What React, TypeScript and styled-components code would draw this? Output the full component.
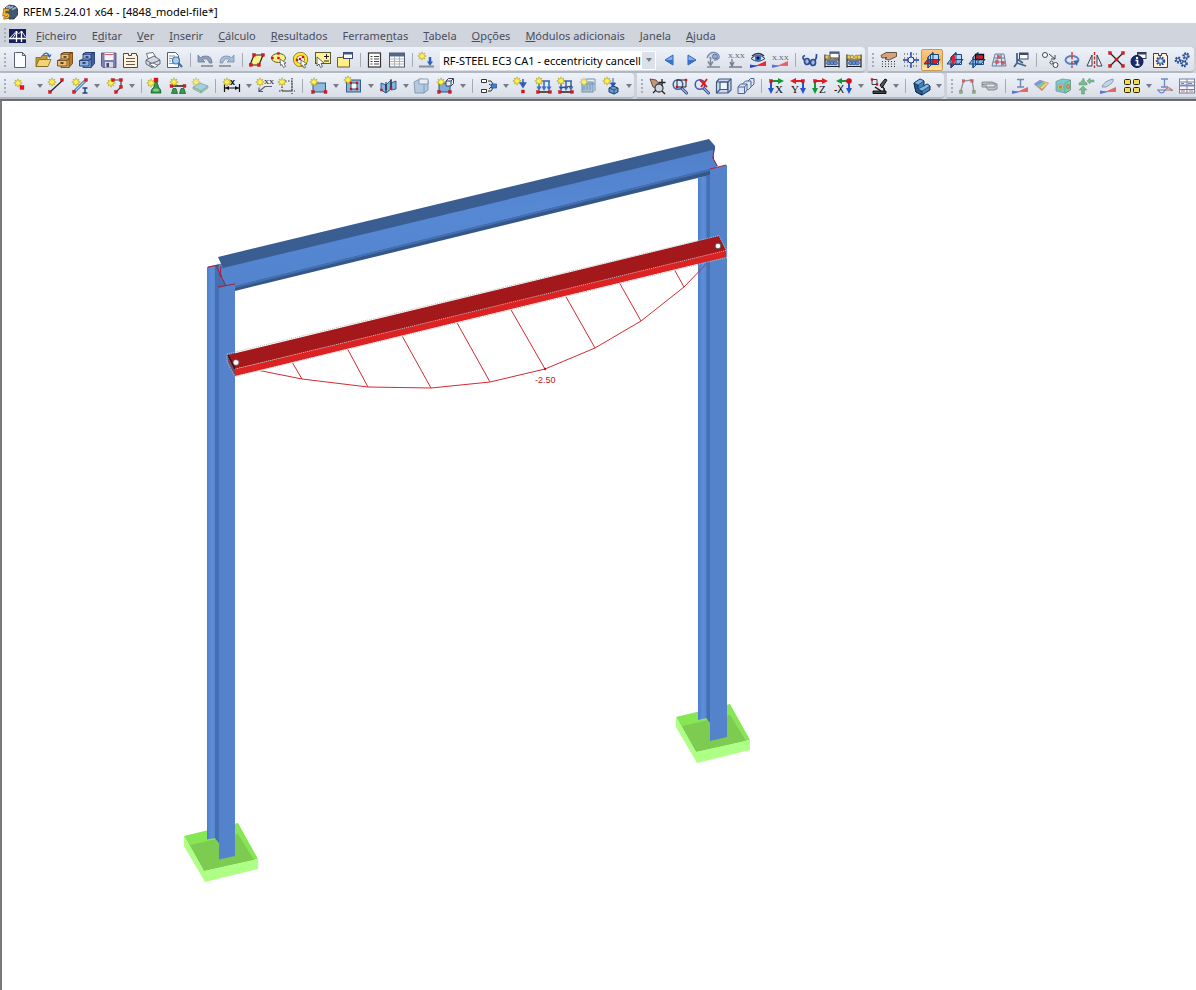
import React from "react";
import styled, { createGlobalStyle, css } from "styled-components";

const GlobalStyle = createGlobalStyle`
  * { box-sizing: border-box; }
  body { margin: 0; background: #fff; font-family: "Open Sans", "Noto Sans", sans-serif; font-size: 11px; }
  button, select { font: inherit; color: inherit; }
`;

const Window = styled.div`
  display: flex;
  flex-direction: column;
  min-height: 100vh;
  overflow: hidden;
`;

const TitleBar = styled.header`
  display: flex;
  align-items: center;
  gap: 5px;
  height: 23px;
  padding-left: 2px;
  background: #fff;
`;

const Title = styled.h1`
  margin: 0;
  font-family: "Noto Sans", "Open Sans", sans-serif;
  font-size: 11px;
  font-weight: 400;
  line-height: 16px;
  color: #000;
  white-space: nowrap;
`;

const MenuBar = styled.nav`
  display: flex;
  align-items: center;
  height: 24px;
  padding-top: 1px;
  background: #cfd4dd;
`;

const Menus = styled.div`
  display: flex;
  gap: 1px;
`;

const MenuItem = styled.button`
  border: 0;
  padding: 0 7px;
  background: none;
  color: #4b4d5c;
  font-family: "Noto Sans", "Open Sans", sans-serif;
  font-size: 11px;
  line-height: 16px;
  white-space: nowrap;
`;

const Logo = styled.svg`
  display: block;
  flex: none;
  margin-right: 3px;
`;

const Dock = styled.div`
  display: flex;
  gap: 3px;
  height: 26px;
  background: #ccd1da;
`;

const Bar = styled.div<{ $fill?: boolean }>`
  display: flex;
  align-items: center;
  flex: none;
  height: 26px;
  background: linear-gradient(#eef2f9, #e4e8f1 50%, #d9dee7);
  border-bottom: 2px solid #b3b7c0;
  border-radius: 0 4px 4px 0;
  padding: 2px 1px 0 0;
  ${(p) => p.$fill && css`flex: 1 0 auto;`}
`;

const Grip = styled.span`
  flex: none;
  width: 9px;
  height: 15px;
  padding-left: 4px;
  &::before {
    content: "";
    display: block;
    width: 2px;
    height: 15px;
    background: repeating-linear-gradient(#a9adb6 0 2px, transparent 2px 4px);
  }
`;

const Divider = styled.span`
  flex: none;
  width: 8px;
  height: 14px;
  padding-left: 5px;
  &::before {
    content: "";
    display: block;
    width: 1px;
    height: 14px;
    background: #a6aab3;
  }
`;

const ToolButton = styled.button<{ $menu?: boolean; $active?: boolean; $dim?: boolean }>`
  display: flex;
  align-items: center;
  flex: none;
  width: ${(p) => (p.$menu ? 35 : 22)}px;
  height: 22px;
  padding: 0 0 0 ${(p) => (p.$menu ? 6 : 4)}px;
  border: 0;
  border-radius: 2px;
  background: none;
  gap: 6px;
  ${(p) => p.$active && css`
    padding-left: 2px;
    border: 1px solid #c29b58;
    background: linear-gradient(#f9c98a, #fdb659 45%, #ffe6a0);
  `}
  svg { flex: none; display: block; }
  ${(p) => p.$dim && css`svg { opacity: 0.7; }`}
`;

const Combo = styled.label`
  display: flex;
  flex: none;
  width: 216px;
  height: 19px;
  margin: 0 2px 0 3px;
  background: #fff;
  border: 1px solid #fff;
`;

const ComboSelect = styled.select`
  appearance: none;
  flex: 1;
  min-width: 0;
  border: 0;
  padding: 0 0 0 2px;
  background: #fff;
  color: #000;
  font-family: "Noto Sans", "Open Sans", sans-serif;
  font-size: 11px;
  line-height: 17px;
  outline: none;
`;

const ComboArrow = styled.span`
  display: flex;
  align-items: center;
  justify-content: center;
  width: 13px;
  background: #dce0e8;
`;

const Workspace = styled.main`
  flex: 1;
  border-top: 2px solid #696b70;
  border-left: 2px solid #77797d;
  background: #fff;
`;

const Scene = styled.svg`
  display: block;
  width: 100%;
  height: auto;
`;

/* Shared icon fragments */
const Star = ({ x = 4, y = 4 }: { x?: number; y?: number }) => (
  <path
    transform={`translate(${x} ${y})`}
    d="M0-4.3L1-1.8 3-3 1.9-1 4.3 0 1.9 1 3 3 1 1.8 0 4.3-1 1.8-3 3-1.9 1-4.3 0-1.9-1-3-3-1-1.8Z"
    fill="#fff04a" stroke="#a19417" strokeWidth=".5"
  />
);
const Dot = ({ x, y, s = 3, c = "#e8131b" }: { x: number; y: number; s?: number; c?: string }) => (
  <rect x={x - s / 2} y={y - s / 2} width={s} height={s} fill={c} stroke="#8a1010" strokeWidth=".3" />
);
const Line = ({ d, c = "#333", w = 1 }: { d: string; c?: string; w?: number }) => (
  <path d={d} fill="none" stroke={c} strokeWidth={w} />
);
const Cabinet = ({ a, b, c }: { a: string; b: string; c: string }) => (
  <g stroke={c} strokeWidth=".8">
    <path d="M4 2l3-1.500h8.500v11L12 15.500z" fill={a} />
    <path d="M4 2h8v13.500H4z" fill={b} />
    <path d="M4 2l3-1.500h8.500L12 2z" fill={b} />
    <path d="M6.500 5h3" stroke="#222" strokeWidth="1.400" />
    <path d="M.5 8.500L4 7h8l-2 1.500v5.500H.5z" fill={b} />
    <path d="M.5 8.500h9.500" fill="none" />
    <path d="M3.500 11h3" stroke="#222" strokeWidth="1.500" />
  </g>
);
const Abacus = () => (
  <g>
    <Line d="M1 2.500v13M15 2.500v13M1 8h14M1 14.500h14" c="#222" w={1.200} />
    {[3, 6, 10.500, 13].map((x) => <circle key={x} cx={x} cy={5} r="1.900" fill="#ecd25a" stroke="#7d6514" strokeWidth=".6" />)}
    {[4.500, 8, 11.500].map((x) => <circle key={x} cx={x} cy={11} r="2" fill="#668ed6" stroke="#173572" strokeWidth=".6" />)}
  </g>
);
const Lens = () => (
  <g>
    <path d="M9.500 10l5 5" stroke="#2b4385" strokeWidth="3" strokeLinecap="round" />
    <path d="M9.500 10l5 5" stroke="#9fb6e4" strokeWidth="1.200" strokeLinecap="round" />
    <circle cx="6" cy="6.500" r="4.800" fill="#dce8fa" stroke="#3d5ea3" strokeWidth="1.500" />
  </g>
);
const Planes = ({ mode }: { mode: number }) => (
  <g strokeWidth="1">
    <path d="M4 5L9 0.500V11l-5 5z" fill={mode === 2 ? "#e5202a" : "#a9cdf0"} stroke="#17477d" />
    <path d="M3.500 7.500H16L12 12H0z" fill={mode === 1 ? "#e5202a" : "#8dbae8"} stroke="#17477d" />
    <path d="M6.500 2.500h8v5h-8z" fill={mode === 3 ? "#f01820" : "#b9d8f5"} stroke={mode === 3 ? "#111" : "#17477d"} strokeWidth={mode === 3 ? 1.400 : 1} />
    <path d="M6.500 7.500v5h8v-5" fill="none" stroke="#17477d" />
    {mode === 2 && <path d="M5 5.500l3-2.500v7l-3 3z" fill="#e5202a" />}
    <path d="M4 5v11l5-5V.5" fill="none" stroke="#17477d" />
  </g>
);
const Axes = ({ a, b, flip, t }: { a: string; b: string; flip?: boolean; t: string }) => (
  <g>
    <g transform={flip ? "matrix(-1 0 0 1 16 0)" : undefined}>
      <path d="M3 3h8" stroke={a} strokeWidth="2" />
      <path d="M10 0l6 3-6 3z" fill={a} />
      <path d="M3 4v7" stroke={b} strokeWidth="2" />
      <path d="M0 10l3 6 3-6z" fill={b} />
      <Dot x={3} y={3} s={3} />
    </g>
    <text x={flip ? 1 : 7} y="15" fontFamily="Liberation Serif, serif" fontSize="11" fill="#111">{t}</text>
  </g>
);
const Frame = () => (
  <g>
    <path d="M3 3h11M3 3v7M8 3v7M13 3v7" stroke="#3466b5" strokeWidth="1.500" fill="none" />
    <path d="M.5 8.500h5L3 13zM5.500 8.500h5L8 13zM10.500 8.500h5L13 13z" fill="#3b70c6" />
    <Line d="M2 14h12" c="#222" w={1.500} />
    <Dot x={2} y={14} /><Dot x={14} y={14} />
  </g>
);
const Eye = () => (
  <g>
    <path d="M1 6.500Q8 0 15 6.500Q8 12 1 6.500Z" fill="#e8eef8" stroke="#28334c" strokeWidth="1" />
    <path d="M2 4Q8-1 14 4" fill="none" stroke="#28334c" strokeWidth="1.400" />
    <circle cx="8" cy="6" r="3.200" fill="#3b73d0" /><circle cx="8" cy="6" r="1.500" fill="#051330" />
  </g>
);
const Wedge = () => (
  <g><path d="M0 12.500V16l8-2z" fill="#2943c8" /><path d="M16 9v4.500H6z" fill="#ee2a30" /><Line d="M0 13.500h16" c="#555" w={.7} /></g>
);
const TinyText = ({ x = 0, y = 6 }: { x?: number; y?: number }) => (
  <text x={x} y={y} fontFamily="Liberation Serif, serif" fontSize="7" fill="#222">X.XX</text>
);
const Gear = ({ x, y, r }: { x: number; y: number; r: number }) => (
  <g><circle cx={x} cy={y} r={r} fill="none" stroke="#264a8c" strokeWidth="2.400" strokeDasharray="1.500 1" /><circle cx={x} cy={y} r={r - .5} fill="#8fb0e6" stroke="#264a8c" strokeWidth=".8" /><circle cx={x} cy={y} r={r / 3} fill="#fff" /></g>
);

const icons: Record<string, React.ReactNode> = {
  page: <path d="M2.500.500h7l3 3V15.500h-11V.5zM9.500.500v3h3" fill="#fbfcfd" stroke="#596273" />,
  open: <g stroke="#7c6216" strokeWidth=".8"><path d="M1 14.500V5.500h5l1-2h5v11z" fill="#c19a35" /><path d="M1 14.500L4 7.500h12l-3 7z" fill="#f2d477" /><path d="M8 3Q12-1 14.500 4M12.500 3l2 2 1.500-2.500" fill="none" stroke="#3c6aa6" strokeWidth="1.300" /></g>,
  cabOrange: <Cabinet a="#b97b2b" b="#f0be74" c="#5d3a0d" />,
  cabBlue: <Cabinet a="#3d60a5" b="#8eb0ec" c="#162c60" />,
  save: <g><path d="M.5 1h14.500v14.500H2L.5 14z" fill="#7d7fae" stroke="#48496f" strokeWidth=".8" /><rect x="3.500" y="1" width="9" height="7" fill="#f3f4fa" /><path d="M3.500 2.500h9" stroke="#e05c68" /><rect x="4" y="10" width="8" height="5.500" fill="#d8dae8" /><rect x="5.500" y="11" width="2.500" height="4" fill="#43456d" /></g>,
  report: <g><path d="M.5 3.500v-2h5v2h3v-2h5v2h1v12H.5z" fill="#fff3e0" stroke="#54483a" /><Line d="M3 6.500h9M3 9.500h9M3 12.500h9" c="#695c4a" /></g>,
  print: <g stroke="#4b5060" strokeWidth=".8"><path d="M3 6.500L1.500 1.500 8 .5l3 5z" fill="#fff" /><path d="M1 8l8-4 6 4v4L7 15.500 1 12z" fill="#d5d9e3" /><path d="M1 8l6 3.500L15 8M7 11.500v4" fill="none" /><path d="M4 12l6 3.500 3-2-5-2.500z" fill="#fff" /></g>,
  preview: <g><path d="M.5.500h8l3 3V15.500H.5z" fill="#fafbfd" stroke="#555f70" /><Line d="M2 4h6M2 6.500h3M2 9h2M2 11.500h4" c="#8c94a3" /><circle cx="9" cy="8.500" r="3.500" fill="#a7cdf1" stroke="#4674ac" strokeWidth="1.200" /><path d="M11.500 11l3.500 4" stroke="#416da6" strokeWidth="2" /></g>,
  undo: <g><path d="M1 3v7h7L5.500 7.500Q10 5 12.500 11h2.500Q15 2 5 4.500L3.500 6z" fill="#8fa0bb" stroke="#5d6f8c" strokeWidth=".7" /><path d="M4 14h12" stroke="#7d8696" strokeWidth="1.500" /></g>,
  redo: <g><path d="M15 3v7H8l2.500-2.500Q6 5 3.500 11H1Q1 2 11 4.500L12.500 6z" fill="#a8bdd6" stroke="#6d84a1" strokeWidth=".7" /><path d="M0 14h12" stroke="#7d8696" strokeWidth="1.500" /></g>,
  selPlane: <g><path d="M5 3h9l-4 10H1z" fill="#fff08a" stroke="#222" strokeWidth="1.200" /><Dot x={5} y={3} /><Dot x={14} y={3} /><Dot x={2} y={13} /><Dot x={10} y={13} /></g>,
  selEllipse: <g><ellipse cx="7.500" cy="6" rx="7" ry="4.500" fill="#fff28e" stroke="#65601f" /><Dot x={7.5} y={1.5} s={2} /><Dot x={1.5} y={6} s={2} /><Dot x={7.5} y={6} s={2} /><path d="M9 7l6 4-2 .5 1.500 3-2 1-1.500-3-1.500 1z" fill="#fff" stroke="#444" strokeWidth=".7" /></g>,
  selRing: <g><circle cx="7.500" cy="7.500" r="5.500" fill="#fff" stroke="#63550b" strokeWidth="4" /><circle cx="7.500" cy="7.500" r="5.500" fill="none" stroke="#ffe334" strokeWidth="2.800" /><Dot x={7} y={7} s={2} /><Dot x={4} y={8} s={2} /><Dot x={10} y={5} s={2} /><path d="M8 8l6 4-2.500.500 1 3-1.500.500-1.500-3-1.500 1z" fill="#fff" stroke="#444" strokeWidth=".7" /></g>,
  selPlus: <g><rect x=".5" y=".5" width="15" height="11" fill="#fff294" stroke="#5b572f" /><path d="M9 4.500h5M11.500 2v5M9 9h5" stroke="#222" strokeWidth="1" /><path d="M2 5l7 6-3 .5 1.500 3-2 1L4 12l-2 2z" fill="#fff" stroke="#444" strokeWidth=".8" /></g>,
  notes: <g><path d="M.5 5.500h5l1-1.500h6V15H.5z" fill="#ffef86" stroke="#686134" /><rect x="6.500" y=".5" width="9" height="6" fill="#fafbff" stroke="#3b4668" /><path d="M6.500 1.500h9" stroke="#47578b" strokeWidth="2" /></g>,
  list: <g><rect x="1.500" y="1" width="12" height="14" fill="#fff" stroke="#333" strokeWidth="1.200" /><Line d="M3.500 4.500h2M7 4.500h5M3.500 7h2M7 7h5M3.500 9.500h2M7 9.500h5M3.500 12h2M7 12h5" c="#444" /></g>,
  table: <g><rect x=".5" y="1" width="15" height="14" fill="#fff" stroke="#52576a" /><rect x="1" y="1" width="14" height="3.500" fill="#4f6692" /><Line d="M1 7h14M1 9.500h14M1 12h14M5.500 4v11M10.500 4v11" c="#9ba0a9" w={.8} /></g>,
  loadNew: <g><Star x={3} y={4} /><path d="M11 5v6" stroke="#2b61bd" strokeWidth="2.500" /><path d="M8 9.500h6L11 14z" fill="#2b61bd" /><path d="M0 14.500h15" stroke="#888d99" strokeWidth="2" /></g>,
  prev: <g><path d="M11 3v10L3 8z" fill="#7fb0f0" stroke="#3263b4" strokeWidth="1" /><path d="M11 8v5L3 8z" fill="#3a6fc8" /></g>,
  next: <g><path d="M4 3v10l8-5z" fill="#7fb0f0" stroke="#3263b4" strokeWidth="1" /><path d="M4 8v5l8-5z" fill="#3a6fc8" /></g>,
  eyeLoad: <g><path d="M1 6Q3 0 9 .5Q14 2 13 6Q10 9 8 8" fill="#b9cae6" stroke="#4a5c80" strokeWidth="1.200" /><circle cx="9" cy="4.500" r="2.500" fill="#6d92cd" stroke="#2d4476" /><path d="M4.500 5v7M2 9.500l2.500 4 2.500-4M1 15h13" stroke="#5a6378" strokeWidth="1.500" fill="none" /></g>,
  xxLoad: <g><TinyText /><path d="M4 7v6M2 10l2 4 2-4M1 15h13" stroke="#49536b" strokeWidth="1.300" fill="none" /></g>,
  eyeResult: <g><Eye /><Wedge /></g>,
  xxResult: <g><TinyText y={8} /><Wedge /></g>,
  glasses: <g fill="none" stroke="#2e4d90" strokeWidth="1.700"><ellipse cx="5" cy="9.500" rx="2.500" ry="3" fill="#a6bce8" /><ellipse cx="11" cy="10.500" rx="2.500" ry="3" fill="#a6bce8" /><path d="M2.500 8Q-1 5 3 3.500M13 8.500Q15 6 14.500 2" /></g>,
  abacusWin: <g><Abacus /><rect x="6" y="0" width="9" height="6" fill="#fff" stroke="#404a61" /><path d="M6 1h9" stroke="#404a61" strokeWidth="1.500" /></g>,
  abacus: <Abacus />,
  handGrid: <g><path d="M0 3.500l5-3h10.500V4.500L8 8 4 7l2-1.500-5 .5z" fill="#d2a380" stroke="#523522" strokeWidth=".8" /><path d="M1 9.500h14M1 12h14M1 14.500h14" stroke="#333" strokeWidth="1.200" strokeDasharray="1 2" /></g>,
  snap: <g><path d="M1 2h14M1 6h14M1 10h14M1 14h14" stroke="#333" strokeWidth="1.200" strokeDasharray="1 2" /><path d="M8 0v16M0 8h16" stroke="#1734b8" strokeWidth="1.300" /><circle cx="8" cy="8" r="3" fill="#e8f0fb" stroke="#1d3a80" strokeWidth="1" /></g>,
  plane1: <Planes mode={1} />, plane2: <Planes mode={2} />, plane3: <Planes mode={3} />,
  gridPts: <g><path d="M4 2h9l2 12H1zM7 2L5 14M10 2l1 12M3 6h11M2 10h12" stroke="#33587f" fill="#d4e4f3" strokeWidth="1" /><Dot x={8} y={5} /><Dot x={6} y={10} /><Dot x={12} y={11} /></g>,
  axesWin: <g><path d="M4 1v10l-3 4M4 11l9 3M4 7l6 4" stroke="#46638c" strokeWidth="1.800" fill="none" /><rect x="6.500" y="1" width="8.500" height="6" fill="#fff" stroke="#3c4a66" /><path d="M6.500 2H15" stroke="#3c4a66" strokeWidth="2" /></g>,
  copy: <g fill="#fff" stroke="#444"><circle cx="2" cy="3" r="2.500" /><circle cx="12.500" cy="13" r="2.500" /><circle cx="8.500" cy="10.500" r="1.500" /><path d="M6 2l6 5M12 3v4H8" fill="none" /></g>,
  rotate: <g><ellipse cx="7" cy="8" rx="6.500" ry="4" fill="none" stroke="#5d83bd" strokeWidth="2" /><path d="M8 9l4 5 1-6z" fill="#3d66a5" /><path d="M7 0v16" stroke="#e21a22" strokeWidth="1.300" strokeDasharray="3 1.500" /></g>,
  mirror: <g><path d="M5 3v11H0zM10 3v11h5z" fill="#edf1f8" stroke="#38404f" /><path d="M7.500 0v16" stroke="#e21a22" strokeWidth="1.300" strokeDasharray="3 1.500" /></g>,
  cross: <g><Line d="M1 1l13 13M14 1L1 14" c="#222" w={1.300} /><Dot x={1} y={1} /><Dot x={14} y={1} /><Dot x={1} y={14} /><Dot x={14} y={14} /><Dot x={7.5} y={7.5} s={3} /></g>,
  info: <g><rect x="6.500" y=".5" width="8.500" height="6" fill="#fff" stroke="#333d5c" /><path d="M6.500 1.500H15" stroke="#333d5c" strokeWidth="2" /><circle cx="6" cy="9.500" r="6" fill="#1b2b73" stroke="#0a1238" /><path d="M4.500 8.500h2v5M4.500 13h4" stroke="#fff" strokeWidth="1.600" fill="none" /><circle cx="6" cy="6" r="1.200" fill="#fff" /></g>,
  settings: <g><path d="M.5 3.500v-2h5v2h3v-2h5v2h1v12H.5z" fill="#fff1dc" stroke="#3f3d42" /><Gear x={7.5} y={9} r={3.5} /></g>,
  gears: <g><Gear x={3} y={8} r={2.300} /><Gear x={11} y={4} r={2.500} /><Gear x={9} y={11.500} r={2.600} /></g>,

  node: <g><Star x={3} y={5} /><Dot x={7} y={9.5} s={4} /></g>,
  line: <g><Line d="M2 14L14 3" c="#222" w={1.200} /><Star /><Dot x={2} y={14} /><Dot x={14} y={2} /></g>,
  member: <g><path d="M2 14L13 3" stroke="#3867a5" strokeWidth="3" /><path d="M2 14L13 3" stroke="#b3d0ef" strokeWidth="1.300" /><Star /><Dot x={2} y={14} /><Dot x={14} y={2} /><path d="M10.500 10h5M10.500 15h5M13 10v5" stroke="#24417c" strokeWidth="1.500" /></g>,
  polyline: <g><Line d="M5 2h9v7l-5 5" c="#444" w={1.200} /><Star y={5} /><Dot x={6} y={2} /><Dot x={14} y={2} /><Dot x={14} y={9} /><Dot x={9} y={14} /></g>,
  support: <g><path d="M7 4h2l1.500 5Q13 11 13 15H3Q3 11 6 9z" fill="#369a48" stroke="#175c28" strokeWidth=".8" /><ellipse cx="8" cy="12" rx="3" ry="1.500" fill="#7fcf8a" /><Dot x={8} y={2} s={4} /><Star x={3} y={5} /></g>,
  lineSupport: <g><Line d="M1 8h14" c="#222" w={1.500} /><Dot x={1.500} y={8} /><Dot x={14.500} y={8} /><path d="M3 10.500h3l1.500 5h-6zM11 10.500h3l1.500 5h-6z" fill="#389749" stroke="#175c28" strokeWidth=".7" /><Star y={4} /></g>,
  layer: <g><path d="M1 9l7-4 8 3-7 5z" fill="#86c7de" stroke="#468ca7" strokeWidth=".8" /><path d="M1 9v2l8 4v-2zM9 15l7-5V8l-7 5z" fill="#8bbf91" stroke="#4d8b64" strokeWidth=".6" /><Star /></g>,
  dimension: <g><Line d="M.5 6v8M15.500 6v8M1 10h14" c="#111" w={1.200} /><path d="M1 10l4-2v4zM15 10l-4-2v4z" fill="#111" /><Star x={3} y={4} /><text x="6" y="7" fontSize="9" fontWeight="700" fontFamily="Liberation Sans, sans-serif">x</text></g>,
  comment: <g><Line d="M15 8.500H8l-6 5M2 9.500v4h4" c="#59616f" w={1.200} /><text x="7" y="6" fontSize="7" fontFamily="Liberation Serif, serif">XX</text><Star x={3} /></g>,
  region: <g><path d="M3 3h10v10H3zM0 13h16M13 0v16" fill="none" stroke="#333" strokeWidth="1.200" strokeDasharray="1.500 1.500" /><Star x={3} /></g>,
  surface: <g><rect x="2" y="5" width="12.500" height="9" fill="#8fb9df" stroke="#2d5b8e" /><Star x={3} /><Dot x={2} y={14} /><Dot x={14.500} y={14} /></g>,
  opening: <g><rect x=".5" y="2" width="14" height="12" fill="#8fb1d3" stroke="#355e88" /><rect x="5" y="5" width="6" height="6" fill="#f3f7fd" stroke="#355e88" /><Star x={2} y={2} /><Dot x={5} y={5} s={2} /><Dot x={11} y={5} s={2} /><Dot x={5} y={11} s={2} /><Dot x={11} y={11} s={2} /></g>,
  surfaces: <g stroke="#265287" strokeWidth=".9"><path d="M0 5l5 2v8l-5-3zM5 7l5-5v9l-5 4zM10 5l5-2v8l-5 1z" fill="#85b2df" /><Line d="M5 4v8M10 1v9" c="#222" /><Dot x={.5} y={12} s={2} /><Dot x={10} y={10} s={2} /></g>,
  solid: <g stroke="#466c93" strokeWidth=".8"><path d="M0 4l6-3 8 1v10l-4 3H1z" fill="#9fbed9" /><path d="M10 5h5M10 5v10" fill="none" /><path d="M5 1h9v5H5z" fill="#e9eef5" /></g>,
  solidNew: <g><path d="M1 5h11v9H1z" fill="#7eaddd" stroke="#265287" /><path d="M8 3h5v5H8zM8 3l2.500-2.500H15.500V5.500L13 8M13 3l2.500-2.500" fill="#e7edf7" stroke="#39465c" /><Star x={3} y={4} /><Dot x={1} y={14} /><Dot x={12} y={14} /></g>,
  connect: <g><path d="M.5 1.500h5v3h-5zM.5 11.500h5v3h-5z" fill="#fff" stroke="#333" /><path d="M7 3h3l2 3M7 13h3l2-3" fill="none" stroke="#333" /><path d="M8 6l3 2-3 3" stroke="#333" fill="none" /><rect x="10.500" y="6" width="5" height="4" fill="#3d82db" stroke="#204d91" strokeWidth=".7" /></g>,
  nodeLoad: <g><Star x={3} y={3} /><path d="M9 1v6M6.500 5L9 9l2.500-4z" fill="#285dbc" stroke="#285dbc" strokeWidth="1.500" /><Dot x={9} y={13.500} /></g>,
  lineLoad: <g><Frame /><Star x={3} y={3} /></g>,
  lineLoad2: <g><Frame /><Star x={3} y={3} /><Line d="M2 10l12-2" c="#444" /></g>,
  loadGray: <g><rect x="2" y="4" width="11" height="10" fill="#8db5cf" stroke="#457390" /><path d="M6 1h9v12M6 1v6M4 7v5M7 7v5M10 7v5M6 6h9" fill="none" stroke="#456aa3" /><Star /></g>,
  solidLoad: <g><path d="M9 0v7M6.500 5L9 9l2.500-4z" fill="#285dbc" stroke="#285dbc" /><path d="M5 10l4-2 5 2v4l-4 2-5-2z" fill="#679bd3" stroke="#1d406f" /><path d="M5 10l5 2v4M10 12l4-2" fill="none" stroke="#1d406f" strokeWidth=".8" /><Star x={3} y={3} /></g>,

  handMove: <g><path d="M0 1l6 1 4 5-3 3-4-1z" fill="#c79774" stroke="#493327" strokeWidth=".8" /><circle cx="9" cy="10" r="4" fill="#cfd6de" stroke="#404650" strokeWidth="1.300" /><Line d="M12 1v7M8.500 4.500h7M6 12l-3 3M12 13l3 3" c="#222" w={1.300} /></g>,
  zoomWin: <g><Lens /><path d="M5 2h9v7H5z" fill="none" stroke="#222" strokeWidth="1" /><Dot x={14} y={2} s={2} /><Dot x={5} y={9} s={2} /></g>,
  zoomAll: <g><Lens /><path d="M6 2l7 7M13 1L7 9" stroke="#e1171f" strokeWidth="1.800" /></g>,
  box3d: <g fill="none" stroke="#425982" strokeWidth="1.200"><path d="M.5 4L3 1h12v11l-3 3H.5z" fill="#c9d8ee" /><path d="M4 4h7.500v7.500H4z" fill="#f0f5fc" /><path d="M.5 15L4 11.500M12 15V4M.5 4H12l3-3" /></g>,
  boxes: <g fill="#dde5f0" stroke="#4a6694" strokeWidth="1"><path d="M10 3l2.500-2.500H16V6l-2.500 2.500H10z" /><path d="M5 5.500L7.500 3H13v6l-2.500 2.500H5z" /><path d="M0 9l2.500-3H9v6l-2.500 3.500H0zM0 9h6.500v6.500M6.500 9L9 6" /></g>,
  axX: <Axes a="#16963b" b="#2754c9" t="X" />,
  axY: <Axes a="#e31b23" b="#2754c9" flip t="Y" />,
  axZ: <Axes a="#e31b23" b="#16963b" t="Z" />,
  axNegX: <g><Axes a="#16963b" b="#2754c9" flip t="" /><circle cx="13" cy="3" r="2.800" fill="#d3121c" /><text x="-2" y="15" fontFamily="Liberation Sans, sans-serif" fontSize="10">-X</text></g>,
  robot: <g><path d="M9 7l5-6 2 1-5 8z" fill="#555" stroke="#111" /><path d="M4 9l6 4" stroke="#111" strokeWidth="1.500" /><path d="M2 13h13v2.500H2zM11 8q4 2 2 6" fill="#444" stroke="#111" /><path d="M1 1.500h5v5H1z" fill="none" stroke="#444" /><Dot x={1} y={1.5} s={2} /><Dot x={6} y={6.5} s={2} /></g>,
  render: <g stroke="#102f52" strokeWidth="1"><path d="M0 5l6-4 4 2v5l3-2 3 2v4l-8 5-6-3z" fill="#3f82bd" /><path d="M0 5l4 2v4l4 2v4l-6-3z" fill="#2a5b8f" /><path d="M0 5l6-4 4 2-6 4zM4 11l6-3 3-2 3 2-8 5z" fill="#7fb8e6" strokeWidth=".6" /></g>,

  frame: <g><Line d="M.5 14L3.500 3 12 2l2 12" c="#66717f" w={1.300} /><Dot x={3.500} y={3} s={2.500} /><Dot x={12} y={3} s={2.500} /><Dot x={1} y={14} s={3} c="#3faf52" /><Dot x={14} y={14} s={3} c="#3faf52" /></g>,
  camera: <g stroke="#555b63" strokeWidth=".9"><path d="M0 4h10l5 2v5l-3 1H6l-2-3H0z" fill="#b1b5bb" /><path d="M4 6h9v3H4zM0 6.500h3" fill="#e4e6ea" /></g>,
  memberRes: <g><path d="M5 1.500h7M8.500 2v7M5 9h7" stroke="#3d639f" strokeWidth="1.500" /><Wedge /></g>,
  isoSurf: <g><path d="M0 6l6-4 9 3-7 8z" fill="#e9432f" /><path d="M2 6.500L7 3l7 2.500L8 11z" fill="#edd947" /><path d="M0 6l6-4 4 1.500-7 5z" fill="#4f74e0" /><path d="M3 7.500L9 4l3 1-6 5z" fill="#4bbf73" /></g>,
  isoSolid: <g stroke="#29735a" strokeWidth=".7"><path d="M0 3.500L6 1l8.500 1v10l-5 3L0 13z" fill="#4fbccc" /><path d="M9 5l5.500-3v10l-5.500 3z" fill="#65c873" /><circle cx="4.500" cy="9" r="3" fill="#f3e04a" /><circle cx="4.500" cy="9" r="1.500" fill="#e9332b" /><ellipse cx="12" cy="8.500" rx="1.500" ry="2.500" fill="#f0602f" /></g>,
  reaction: <g><path d="M5.500 0l1.500 4 2 1v2H1V5l2-1zM5 8l4 4H6.500v4h-3v-4H1zM9 3l3-3v2h4v2h-4v2z" fill="#4ba862" stroke="#286d3b" strokeWidth=".5" /></g>,
  stress: <g><path d="M2 9Q4 3 13 1Q15 4 6 9z" fill="#b7cbe3" stroke="#637b9b" /><Wedge /></g>,
  panels: <g stroke="#292100" strokeWidth="1" fill="#f5dc55"><rect x=".5" y="1.500" width="6" height="5" rx="1" /><rect x="9.500" y="1.500" width="6" height="5" rx="1" /><rect x=".5" y="9.500" width="6" height="5" rx="1" /><rect x="9.500" y="9.500" width="6" height="5" rx="1" /></g>,
  diagram: <g><path d="M4 1h7M7.500 1v8M4 9h7" stroke="#3d639f" strokeWidth="1.300" /><path d="M0 12h16" stroke="#555" /><path d="M1 12q4 6 7 0" fill="none" stroke="#2f4bd2" strokeWidth="1.200" /><path d="M8 12q4-5 7 1" fill="none" stroke="#e5232a" strokeWidth="1.200" /></g>,
  resTable: <g><rect x=".5" y="1" width="15" height="14" fill="#fff" stroke="#4c5678" /><Line d="M1 4h14M1 11.500h14M8 1v14" c="#4c5678" /><path d="M1 7.500h14" stroke="#5061b4" strokeWidth="2" /><Line d="M2 5.500h3M9 5.500h4M2 13h4M10 13h4" c="#de2a34" /></g>,
};

const Caret = () => (
  <svg width="6" height="4" viewBox="0 0 6 4" aria-hidden="true"><path d="M0 0h6L3 4z" fill="#777b84" /></svg>
);

/* Suffixes: "+" opens a menu, "*" is switched on, "~" is unavailable; "|" is a divider. */
const Tools = ({ items }: { items: string }) => (
  <>
    {items.split(" ").map((item, i) => {
      if (item === "|") return <Divider key={i} />;
      const name = item.replace(/[+*~]/g, "");
      const menu = item.includes("+");
      return (
        <ToolButton key={i} type="button" aria-label={name} $menu={menu} $active={item.includes("*")} $dim={item.includes("~")}>
          <svg width="16" height="16" viewBox="0 0 16 16" overflow="visible" aria-hidden="true">{icons[name]}</svg>
          {menu && <Caret />}
        </ToolButton>
      );
    })}
  </>
);

const menus = ["_Ficheiro", "E_ditar", "_Ver", "_Inserir", "_Cálculo", "_Resultados", "Ferrame_ntas", "_Tabela", "_Opções", "_Módulos adicionais", "_Janela", "_Ajuda"];

const MenuLabel = ({ text }: { text: string }) => {
  const i = text.indexOf("_");
  return <>{text.slice(0, i)}<u>{text[i + 1]}</u>{text.slice(i + 2)}</>;
};

const Support = ({ x, y }: { x: number; y: number }) => (
  <g transform={`translate(${x} ${y})`}>
    <path d="M0 13L54 0 74 36 20 48z" fill="#87e654" />
    <path d="M6 22L54 11 70 37 20 48z" fill="#7dcc51" />
    <path d="M0 13L20 48 74 36V46L21 59 0 23z" fill="#aeff85" />
  </g>
);

const ribs = "M292 362L302 379M347 348L368 387M401 334L431 388M456 321L490 382M510 308L545 369M565 295L595 348M619 282L641 321M674 269L684 287";

const Model = () => (
  <Scene viewBox="2 101 1194 889" preserveAspectRatio="xMinYMin meet" role="img" aria-label="Modelo">
    <defs>
      <linearGradient id="back" x1="0" x2="1"><stop offset="0" stopColor="#4d7dc8" /><stop offset=".35" stopColor="#5c8ed9" /><stop offset="1" stopColor="#5182cb" /></linearGradient>
      <linearGradient id="web" x1="0" y1="0" x2=".12" y2="1"><stop offset="0" stopColor="#4f7ec7" /><stop offset=".5" stopColor="#5788d4" /><stop offset="1" stopColor="#5283cd" /></linearGradient>
      <clipPath id="below"><path d="M235 377L727 258V420H235z" /></clipPath>
    </defs>
    <Support x={184} y={823} />
    <Support x={676} y={704} />
    {/* columns */}
    <path d="M207 267L219 264V843L215 838 207 839.500z" fill="url(#back)" />
    <path d="M215 265H219V843L215 838z" fill="#456fb0" />
    <path d="M698 178L711 174V724L706 718 698 720z" fill="url(#back)" />
    <path d="M706.500 176H711V724L706.500 718z" fill="#456fb0" />
    <path d="M219 286L235 284V856L219 859.500z" fill="#5482cb" />
    {/* top beam */}
    <path d="M219 264L715 149 713 158 718 166 710 170V174L235 288V284L219 288z" fill="url(#web)" />
    <path d="M216 265L221 276 226 286 219 288 215 288z" fill="#456fb0" />
    <path d="M235 286L710 169V175L235 291z" fill="#345789" />
    <path d="M235 286L710 169V171L235 288z" fill="#456fae" />
    <path d="M218 257L709 139 715 146V149.500L223 268z" fill="#3a5d92" />
    <path d="M710 169L727 165V737L710 741z" fill="#5482cb" />
    <path d="M208 267L219 265M216 265L221 276 226 286M221 266L220 275M218 287L235 284M714 149L713 158 717 166M710 169L726 165" fill="none" stroke="#a51f3a" strokeWidth="1" />
    <path d="M219 274l3 1-1 3zM712 156l2 1v3z" fill="#bd1029" />
    {/* eccentric beam */}
    <path d="M228 355L719 236 726 251 235 369z" fill="#a3191b" />
    <path d="M235 369L726 250V257L235 376z" fill="#dc2222" />
    <path d="M227 356L235 369V376L228 362z" fill="#75485e" />
    <path d="M227 354L719 235.500 727 251V257.500L235 376.500 227 362zM235 369L726 250.500" fill="none" stroke="#bdb8b8" strokeWidth="1" strokeDasharray="1 1" />
    <path d="M228 355L235 369" stroke="#331010" strokeWidth="1.500" />
    <circle cx="236" cy="362.500" r="2.800" fill="#fff" stroke="#667" strokeWidth=".6" />
    <circle cx="718" cy="246" r="2.800" fill="#fff" stroke="#355" strokeWidth=".8" />
    {/* moment diagram */}
    <path d={`M235 366L262 371 302 379 368 387 431 388 490 382 545 369 595 348 641 321 684 287 709 261${ribs}`} fill="none" stroke="#d32a30" strokeWidth="1" clipPath="url(#below)" />
    <circle cx="545" cy="369" r="1.200" fill="#c01018" />
    <text x="535" y="383" fontFamily="Liberation Sans, Arial, sans-serif" fontSize="9" fill="#c01620">-2.50</text>
  </Scene>
);

export default function App() {
  return (
    <Window>
      <GlobalStyle />
      <TitleBar>
        <svg width="16" height="16" viewBox="0 0 16 16" aria-hidden="true">
          <path d="M3 4l4-3 3 .5 3 .500 2.500 3v6L12 15H7z" fill="#3f5675" stroke="#1d2c42" strokeWidth=".8" />
          <path d="M4 4l4-2M7 4.500l4-2M10 5.500l4-2" stroke="#9db3cf" strokeWidth="1.500" />
          <path d="M7 6H2.500L2 10.500Q6 9 6.500 11.500T1.500 14" fill="none" stroke="#8a5b06" strokeWidth="2.800" />
          <path d="M7 6H2.500L2 10.500Q6 9 6.500 11.500T1.500 14" fill="none" stroke="#f5b92c" strokeWidth="1.600" />
        </svg>
        <Title>RFEM 5.24.01 x64 - [4848_model-file*]</Title>
      </TitleBar>
      <MenuBar>
        <Grip />
        <Logo width="17" height="14" viewBox="0 0 17 14" aria-hidden="true">
          <path d="M0 0h17v14H0z" fill="#17205c" />
          <path d="M0 9.500h17M7.500 2v11M12.500 2v11" stroke="#fff" strokeWidth="1.300" />
          <path d="M1 9L7.500 2M4 9l3-5M7.500 2Q9 7 12.500 2M12.500 2l4 6" stroke="#fff" strokeWidth=".9" fill="none" />
        </Logo>
        <Menus>
          {menus.map((m) => <MenuItem key={m} type="button"><MenuLabel text={m} /></MenuItem>)}
        </Menus>
      </MenuBar>
      <Dock>
        <Bar>
          <Grip />
          <Tools items="page open cabOrange cabBlue save report print preview | undo redo | selPlane selEllipse selRing selPlus notes | list table | loadNew" />
          <Combo>
            <ComboSelect aria-label="RF-STEEL EC3">
              <option>RF-STEEL EC3 CA1 - eccentricity cancell</option>
            </ComboSelect>
            <ComboArrow><Caret /></ComboArrow>
          </Combo>
          <Tools items="prev next eyeLoad~ xxLoad~ eyeResult xxResult~ | glasses abacusWin abacus" />
        </Bar>
        <Bar>
          <Grip />
          <Tools items="handGrid snap plane1* plane2 plane3 gridPts~ axesWin | copy rotate mirror cross info settings gears" />
        </Bar>
      </Dock>
      <Dock>
        <Bar>
          <Grip />
          <Tools items="node+ line member+ polyline+ | support lineSupport layer~ | dimension+ comment region | surface+ opening+ surfaces+ solid~ solidNew+ | connect+ nodeLoad lineLoad lineLoad2 loadGray~ solidLoad+" />
        </Bar>
        <Bar>
          <Grip />
          <Tools items="handMove zoomWin zoomAll box3d boxes | axX axY axZ axNegX+ robot+ | render+" />
        </Bar>
        <Bar $fill>
          <Grip />
          <Tools items="frame~ camera~ | memberRes~ isoSurf~ isoSolid~ reaction~ stress~ panels+ diagram~ resTable~" />
        </Bar>
      </Dock>
      <Workspace><Model /></Workspace>
    </Window>
  );
}
